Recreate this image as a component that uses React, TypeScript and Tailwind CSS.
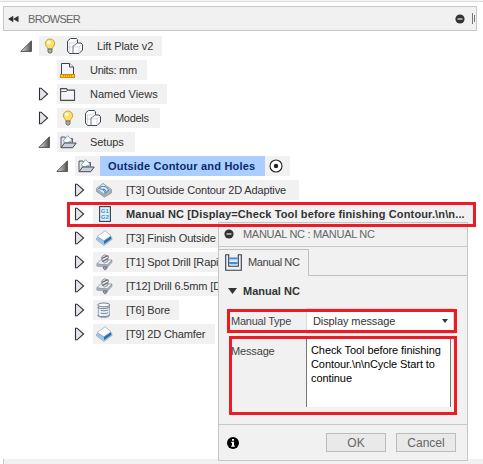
import React from "react";

type Kids = { children?: React.ReactNode };

function Expanded() {
  return (
    <svg width="12" height="12" viewBox="0 0 12 12" className="shrink-0">
      <defs>
        <linearGradient id="tri" x1="0" x2="1">
          <stop offset="0.1" stopColor="#d8d8d8" />
          <stop offset="1" stopColor="#505050" />
        </linearGradient>
      </defs>
      <path d="M.8 11.400L11.400.9v10.500z" fill="url(#tri)" stroke="#333" strokeWidth=".8" />
    </svg>
  );
}

function Collapsed() {
  return (
    <svg width="12" height="14" viewBox="0 0 12 14" className="shrink-0">
      <path d="M1.500 1.200h1.600L9.600 7l-6.500 5.800H1.500z" fill="#e3e5ee" stroke="#2e2e2e" strokeWidth="1.100" />
    </svg>
  );
}

function Bulb() {
  return (
    <svg width="12" height="16" viewBox="0 0 12 16" className="shrink-0">
      <path d="M6 1a4.600 4.600 0 0 0-4.600 4.600C1.400 8.200 3.600 8.800 3.800 11h4.400c.2-2.200 2.400-2.800 2.400-5.400A4.600 4.600 0 0 0 6 1z" fill="#ffe066" stroke="#c9a227" strokeWidth="1" />
      <circle cx="4.800" cy="4.600" r="2" fill="#fffbd8" />
      <path d="M4 11h4v3L7 15H5l-1-1z" fill="#a9adb5" stroke="#565b66" strokeWidth=".8" />
    </svg>
  );
}

function Component() {
  return (
    <svg width="18" height="18" viewBox="0 0 18 18" className="shrink-0">
      <path d="M1.500 4L4.500 1.500h6l1 1.200V6H15l1.500 1.500V13L13 16.500H3.500l-2-2.500z" fill="#fafbfc" stroke="#42464f" strokeWidth="1" strokeLinejoin="round" />
      <path d="M2 4.500L3.500 6H8l3-3.500M2 10h5M3.500 6v10M7.500 9.800H13l3-2.500M13 9.800V16" fill="none" stroke="#cfd2d7" strokeWidth=".8" />
      <path d="M11.500 6L7 9v7.500" fill="none" stroke="#666b75" strokeWidth=".9" />
    </svg>
  );
}

function Units() {
  return (
    <svg width="16" height="17" viewBox="0 0 16 17" className="shrink-0">
      <path d="M1.500 12V1.500h8L13.500 5v7" fill="#f4f6fb" stroke="#3b4049" />
      <path d="M9.500 1.500V5h4" fill="#fff" stroke="#3b4049" />
      <rect x=".5" y="12.500" width="14" height="3" fill="#ffc72c" stroke="#d78900" />
      <path d="M3.500 13v1.500M5.500 13v1.500M7.500 13v1.500M9.500 13v1.500M11.500 13v1.500" stroke="#b87500" strokeWidth=".8" />
    </svg>
  );
}

function Folder() {
  return (
    <svg width="16" height="15" viewBox="0 0 16 15" className="shrink-0">
      <path d="M.6 13.400V1.600h5.900l1 1.500h7v10.300z" fill="#f3f5f8" stroke="#454a53" strokeWidth="1.100" />
      <path d="M1.200 4.700h5l1.200-1.400" fill="none" stroke="#454a53" />
      <path d="M2 6h11.500" stroke="#fff" />
    </svg>
  );
}

function SetupFolder() {
  return (
    <svg width="17" height="14" viewBox="0 0 17 14" className="shrink-0">
      <path d="M1 12.500V2h4l1 1.500h6.500v4" fill="#e1e4e8" stroke="#555a64" />
      <path d="M3.500 5.500l4-4.700 4.500 4-2 4-5 .3z" fill="#fff" stroke="#759cc0" strokeWidth=".9" />
      <path d="M4 6l2.500 1.500L11.500 5 10 9H5z" fill="#8ebbe0" />
      <path d="M1 12.700L4.500 8h11.700l-3.400 4.700z" fill="#c9d0d8" stroke="#484d56" strokeLinejoin="round" />
    </svg>
  );
}

function Adaptive() {
  return (
    <svg width="16" height="16" viewBox="0 0 16 16" className="shrink-0">
      <path d="M.6 6.500L7 1.500l8.400 6v3.500L8.500 15 .6 9.500z" fill="#a9afb7" stroke="#868d97" strokeWidth=".8" />
      <path d="M.8 6.500L7 1.700l8.200 6L8.500 12z" fill="#f1f3f5" stroke="#9aa0a8" strokeWidth=".6" />
      <path d="M2.500 6.500C4.500 3.300 10 3.500 13.300 7.800L8.700 11.500C9.500 8.800 6 7 2.500 6.500z" fill="#9bc6eb" stroke="#3475b3" strokeWidth=".9" />
      <path d="M5.300 6.300c2-1.500 5-.3 5.500 2.200" fill="none" stroke="#e9f4fd" strokeWidth="1.200" />
      <path d="M7 7.500c1.300-.6 2.500.3 2.500 1.800" fill="none" stroke="#3475b3" strokeWidth=".9" />
    </svg>
  );
}

function ManualCode() {
  return (
    <svg width="12" height="16" viewBox="0 0 12 16" className="shrink-0">
      <rect x=".6" y=".6" width="10.800" height="14.800" fill="#e6f2fb" stroke="#353c47" strokeWidth="1.100" />
      <text x="1.800" y="7.400" fontFamily="Liberation Sans, sans-serif" fontSize="6" fontWeight="700" fill="#2f95e0">G1</text>
      <text x="1.800" y="13.300" fontFamily="Liberation Sans, sans-serif" fontSize="6" fontWeight="700" fill="#2f95e0">G2</text>
    </svg>
  );
}

function Block() {
  return (
    <svg width="17" height="16" viewBox="0 0 17 16" className="shrink-0">
      <path d="M.5 8.500L8 4l8 4v1.300L8 15.300.5 9.800z" fill="#cfd6de" stroke="#7b858f" strokeWidth=".6" />
      <path d="M1.200 6.500v2.700L8 14v-4z" fill="#8cc3f0" />
      <path d="M15.200 6v2.900L8 14.200V10z" fill="#2072ba" />
      <path d="M1.200 6.500L9 .7l6 5L8 10.700z" fill="#fbfcfd" stroke="#8f979f" strokeWidth=".6" />
    </svg>
  );
}

function Drill() {
  return (
    <svg width="17" height="17" viewBox="0 0 17 17" className="shrink-0">
      <path d="M.8 10L5 5.500l11 .5-4.500 5z" fill="#eceef0" stroke="#8b9098" strokeWidth=".8" />
      <path d="M.8 10v2.200l10.700 1L16 8.500V6l-4.500 5z" fill="#a5b4c3" stroke="#8b9098" strokeWidth=".5" />
      <path d="M5.500 3L8.500.8l4 1.200-.8 5.500L8.500 9l-2.300-1.800z" fill="#d0d3d7" stroke="#777c84" strokeWidth=".7" />
      <path d="M6 4.500l5.800-2.700M6.300 7.500l5.500-3" stroke="#5f656e" strokeWidth="1.200" />
      <path d="M6.700 5.600l4.500-2.300" stroke="#fff" strokeWidth=".8" />
      <path d="M7.300 12.800h4l-.8 2.200-1.500 1-1.500-1.200z" fill="#9a9fa7" stroke="#60656d" strokeWidth=".7" />
    </svg>
  );
}

function Bore() {
  return (
    <svg width="16" height="17" viewBox="0 0 16 17" className="shrink-0">
      <path d="M2.300 3v11c1.500 2 9.500 2 11 0V3z" fill="#e9edf1" stroke="#929aa3" strokeWidth=".9" />
      <ellipse cx="7.800" cy="2.900" rx="6" ry="1.900" fill="#f7f8f9" stroke="#69737f" strokeWidth=".9" />
      <path d="M4.500 5.500v9" stroke="#fff" />
      <path d="M1.300 5c.5 2 10 2.200 12.500 0M4.500 8.200c2 .8 5.500.7 7.500-.2M4.500 11c2 .8 5.500.7 7.500-.2M1.300 13c.5 1.800 10 2.500 12.500 0" fill="none" stroke="#5f7c99" strokeWidth=".9" />
    </svg>
  );
}

function Stock() {
  return (
    <svg width="17" height="17" viewBox="0 0 17 17" className="shrink-0">
      <path d="M.7.7h3v11.600h9.600V.7h3v15.600H.7z" fill="#eef0f3" stroke="#383d4a" strokeWidth="1.100" />
      <path d="M4.300 4.500h8.400M4.300 9h8.400" stroke="#3b8fd8" strokeWidth="2" />
      <path d="M4.300 6h8.400M4.300 10.500h8.400" stroke="#b9d6ef" />
    </svg>
  );
}

function Minus() {
  return (
    <svg width="10" height="10" viewBox="0 0 10 10" className="shrink-0">
      <circle cx="5" cy="5" r="4.600" fill="#333" />
      <path d="M2.500 5h5" stroke="#eee" strokeWidth="1.200" />
    </svg>
  );
}

function Row({ indent, arrow, children }: Kids & { indent: string; arrow?: React.ReactNode }) {
  return (
    <div className={`flex h-5 ${indent}`}>
      <div className="flex w-[19px] shrink-0 items-center">{arrow}</div>
      {children}
    </div>
  );
}

function Op({ icon, width, bold, children }: Kids & { icon: React.ReactNode; width: string; bold?: boolean }) {
  return (
    <Row indent="pl-[74px]" arrow={<Collapsed />}>
      <div className={`flex items-center bg-[#f1f1f1] ${width}`}>
        <div className="flex w-[33px] shrink-0 items-center pl-[3px]">{icon}</div>
        <span className={bold ? "font-bold tracking-[0.14px]" : "tracking-[-0.14px]"}>{children}</span>
      </div>
    </Row>
  );
}

function Dialog() {
  return (
    <section className="absolute left-[218px] top-[222px] flex h-[239px] w-[250px] flex-col border border-[#c6c6c6] bg-[#f1f1f1]">
      <header className="flex h-6 items-center gap-[9px] border-b border-[#c6c6c6] pb-px pl-[5px] text-[#666]">
        <Minus />
        <span className="tracking-[-0.3px]">MANUAL NC : MANUAL NC</span>
      </header>
      <div className="flex h-[29px] items-end">
        <div className="flex h-[27px] w-[90px] items-center gap-[6px] border-r border-t border-[#c0c0c0] pb-[2px] pl-[6px] text-[#444]">
          <Stock />
          <span className="tracking-[-0.4px]">Manual NC</span>
        </div>
        <div className="h-px flex-1 bg-[#c0c0c0]" />
      </div>
      <div className="flex h-[32px] items-center gap-[6px] pb-[2px] pl-[9px] font-bold">
        <svg width="9" height="6"><path d="M0 0h9L4.500 6z" fill="#333" /></svg>
        <span>Manual NC</span>
      </div>
      <div className="flex h-[26px] pl-3">
        <span className="w-[75px] leading-[26px] tracking-[-0.25px] text-[#444]">Manual Type</span>
        <div className="flex w-[148px] items-center justify-between border border-[#d8d8d8] bg-white pl-[6px] pr-[5px]">
          <span className="tracking-[-0.1px]">Display message</span>
          <svg width="6" height="4"><path d="M0 0h6L3 4z" fill="#333" /></svg>
        </div>
      </div>
      <div className="flex h-[90px] pl-3 pt-1">
        <span className="w-[75px] pt-[6px] tracking-[-0.15px] text-[#444]">Message</span>
        <div className="h-[69px] w-[145px] border-x border-[#777] bg-white pl-1 pt-[5px] leading-[14px] tracking-[-0.08px] text-black">
          Check Tool before finishing<br />Contour.\n\nCycle Start to<br />continue
        </div>
      </div>
      <footer className="flex flex-1 items-center border-t border-[#c6c6c6] pl-2 pr-[11px] text-xs text-[#666]">
        <svg width="12" height="12" viewBox="0 0 12 12">
          <circle cx="6" cy="6" r="6" fill="#000" />
          <path d="M5 2h2v1.800H5zM4.300 4.800H7v3.700h.8v1.200H4.200V8.500H5V6h-.7z" fill="#fff" />
        </svg>
        <div className="ml-auto flex gap-[10px]">
          <button className="h-[19px] w-[60px] border border-[#bcbcbc] bg-[#e9e9e9]">OK</button>
          <button className="h-[19px] w-[60px] border border-[#bcbcbc] bg-[#e9e9e9]">Cancel</button>
        </div>
      </footer>
    </section>
  );
}

export default function App() {
  return (
    <main className="relative flex h-[464px] w-[483px] flex-col overflow-hidden whitespace-nowrap bg-white font-['Liberation_Sans',Arial,sans-serif] text-[11px] leading-[14px] text-[#333]">
      <div className="h-[2px] border-b border-[#dcdcdc] bg-[#f4f4f4]" />
      <header className="ml-[3px] mt-1 flex h-[25px] w-[474px] items-center border border-[#c8c8c8] bg-[#f1f1f1] pl-1 pr-px text-[#666]">
        <svg width="11" height="8" viewBox="0 0 11 8"><path d="M5.300.7v6.600L0 4zM10.500.7v6.600L5.200 4z" fill="#333" /></svg>
        <span className="ml-[9px] tracking-[-0.7px]">BROWSER</span>
        <div className="ml-auto flex items-center gap-[7px]">
          <Minus />
          <div className="flex items-center gap-px"><i className="h-[11px] w-px bg-[#777]" /><i className="h-[7px] w-px bg-[#777]" /></div>
        </div>
      </header>
      <div className="mt-[5px] flex flex-col gap-1">
        <Row indent="pl-5" arrow={<Expanded />}>
          <div className="flex w-[123px] items-center bg-[#f1f1f1] pl-[5px]">
            <Bulb /><div className="ml-[10px] mr-[12px]"><Component /></div><span className="ml-px tracking-[-0.1px]">Lift Plate v2</span>
          </div>
        </Row>
        <Row indent="pl-[38px]">
          <div className="flex w-[90px] items-center bg-[#f1f1f1] pl-[3px]"><Units /><span className="ml-[14px] tracking-[-0.3px]">Units: mm</span></div>
        </Row>
        <Row indent="pl-[38px]" arrow={<Collapsed />}>
          <div className="flex w-[110px] items-center bg-[#f1f1f1] pl-[3px]"><Folder /><span className="ml-[14px]">Named Views</span></div>
        </Row>
        <Row indent="pl-[38px]" arrow={<Collapsed />}>
          <div className="flex w-[103px] items-center bg-[#f1f1f1] pl-[5px]">
            <Bulb /><div className="ml-[10px] mr-[13px]"><Component /></div><span className="tracking-[-0.3px]">Models</span>
          </div>
        </Row>
        <Row indent="pl-[38px]" arrow={<Expanded />}>
          <div className="flex w-[78px] items-center bg-[#f1f1f1] pl-[3px]"><SetupFolder /><span className="ml-[13px] tracking-[-0.1px]">Setups</span></div>
        </Row>
        <Row indent="pl-14" arrow={<Expanded />}>
          <div className="flex w-[215px] items-center bg-[#f1f1f1] pl-[3px]">
            <SetupFolder />
            <div className="ml-[5px] flex h-5 w-[165px] items-center bg-[#aaceff] pl-2 font-bold tracking-[0.2px] text-[#0a2a6c]">Outside Contour and Holes</div>
            <svg width="14" height="14" viewBox="0 0 14 14" className="ml-1"><circle cx="7" cy="7" r="6" fill="#fff" stroke="#222" strokeWidth="1.100" /><circle cx="7" cy="7" r="2.200" fill="#222" /></svg>
          </div>
        </Row>
        <Op icon={<Adaptive />} width="w-[206px]">[T3] Outside Contour 2D Adaptive</Op>
        <Op icon={<span className="pl-[3px]"><ManualCode /></span>} width="w-[382px]" bold>Manual NC [Display=Check Tool before finishing Contour.\n\n...</Op>
        <Op icon={<Block />} width="w-[206px]">[T3] Finish Outside Contour</Op>
        <Op icon={<Drill />} width="w-[206px]">[T1] Spot Drill [Rapid out]</Op>
        <Op icon={<Drill />} width="w-[206px]">[T12] Drill 6.5mm [Drill]</Op>
        <Op icon={<Bore />} width="w-[86px]">[T6] Bore</Op>
        <Op icon={<Block />} width="w-[122px]">[T9] 2D Chamfer</Op>
      </div>
      <div className="ml-[3px] mt-auto h-[5px] border-l border-[#c8c8c8] bg-[#f1f1f1]" />
      <Dialog />
      <div className="absolute left-[67px] top-[202px] h-[25px] w-[409px] border-[3px] border-[#ed1c24]" />
      <div className="absolute left-[227px] top-[309px] h-6 w-[230px] border-[3px] border-[#ed1c24]" />
      <div className="absolute left-[229px] top-[336px] h-[79px] w-[228px] border-[3px] border-[#ed1c24]" />
    </main>
  );
}
